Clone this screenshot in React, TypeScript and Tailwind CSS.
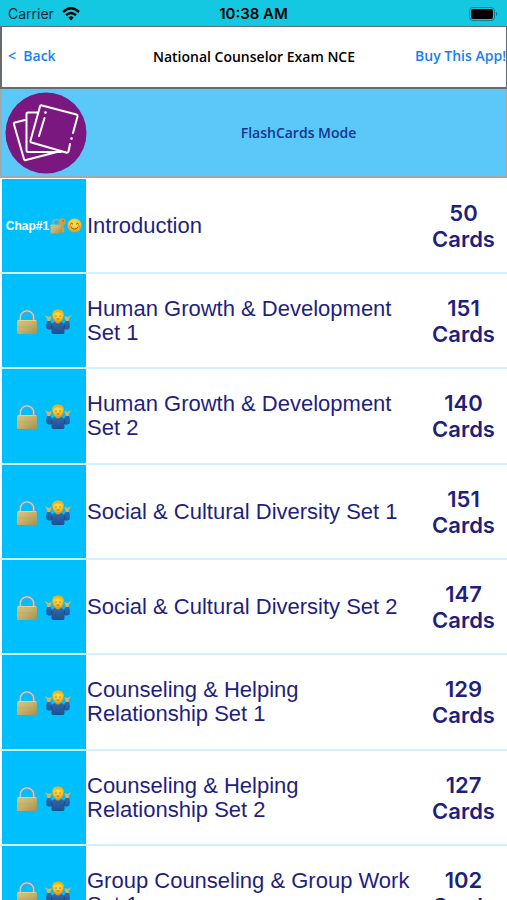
type Chapter = { title: string; cards: number; open?: boolean };

const chapters: Chapter[] = [
  { title: "Introduction", cards: 50, open: true },
  { title: "Human Growth & Development Set 1", cards: 151 },
  { title: "Human Growth & Development Set 2", cards: 140 },
  { title: "Social & Cultural Diversity Set 1", cards: 151 },
  { title: "Social & Cultural Diversity Set 2", cards: 147 },
  { title: "Counseling & Helping Relationship Set 1", cards: 129 },
  { title: "Counseling & Helping Relationship Set 2", cards: 127 },
  { title: "Group Counseling & Group Work Set 1", cards: 102 },
];

function Gradients() {
  return (
    <svg className="absolute h-0 w-0" aria-hidden="true">
      <defs>
        <linearGradient id="brass" x1="0" y1="0" x2="1" y2="1">
          <stop offset="0" stopColor="#d8c680" />
          <stop offset="0.5" stopColor="#c4b06a" />
          <stop offset="1" stopColor="#a3904f" />
        </linearGradient>
        <radialGradient id="face" cx="0.5" cy="0.35" r="0.7">
          <stop offset="0" stopColor="#ffe04a" />
          <stop offset="0.6" stopColor="#fbc02d" />
          <stop offset="1" stopColor="#d98a12" />
        </radialGradient>
        <linearGradient id="shirt" x1="0" y1="0" x2="0" y2="1">
          <stop offset="0" stopColor="#2f6cae" />
          <stop offset="1" stopColor="#1d4f91" />
        </linearGradient>
      </defs>
    </svg>
  );
}

function LockIcon() {
  return (
    <svg width="22" height="26" viewBox="0 0 22 26" aria-hidden="true">
      <path d="M4.5 12V8.500a6.500 6.500 0 0 1 13 0V12" fill="none" stroke="#7f9ba6" strokeWidth="2.800" />
      <path d="M4.300 12V8.500a6.700 6.700 0 0 1 13.400 0V12" fill="none" stroke="#bfd2d9" strokeWidth="1.200" />
      <rect x="1" y="11" width="20" height="14" rx="1.500" fill="url(#brass)" />
      <path d="M1.500 18h19" stroke="#b39f5b" strokeWidth="0.400" />
      <path d="M2 11.500h18" stroke="#e8d892" strokeWidth="0.800" />
    </svg>
  );
}

function ShrugIcon() {
  return (
    <svg width="28" height="26" viewBox="0 0 28 26" aria-hidden="true">
      <path d="M.500 6 4.500 8 7.500 7 7 9.500 5.500 12.500 3.400 12 3 9.500ZM27.500 6 23.500 8 20.500 7 21 9.500 22.500 12.500 24.600 12 25 9.500Z" fill="#dcb552" />
      <path d="M3 12 6.300 12 8 14.500 11 12.800H17L20 14.500 21.700 12 25 12Q26.500 16 25.500 19.500 22.500 21.500 20.500 20V23.500Q20 25 18.500 25H9.500Q8 25 7.500 23.500V20Q5.500 21.500 2.500 19.500 1.500 16 3 12Z" fill="url(#shirt)" />
      <path d="M7.500 16 8 20M20.500 16 20 20" stroke="#174375" strokeWidth="0.800" />
      <path d="M11.500 10.500h5V13.500q-2.500 2-5 0Z" fill="#d49a20" />
      <ellipse cx="14" cy="7" rx="5.600" ry="6.200" fill="url(#face)" />
      <path d="M8.300 6.500Q7.500.500 14 .400 20.500.500 19.700 6.500 18.500 3.200 14 3.300 9.600 3.200 8.300 6.500Z" fill="#efb21c" />
      <circle cx="12" cy="7" r="0.600" fill="#6b4716" />
      <circle cx="16" cy="7" r="0.600" fill="#6b4716" />
      <path d="M12.600 10h2.800" stroke="#b0562a" strokeWidth="0.900" />
    </svg>
  );
}

function KeyLockIcon() {
  return (
    <svg width="16" height="16" viewBox="0 0 15 15" aria-hidden="true">
      <path d="M2.800 7V4.500a3 3 0 0 1 6 0V7" fill="none" stroke="#8fa9a5" strokeWidth="1.500" />
      <rect x="0.500" y="6" width="10.500" height="8.500" rx="0.800" fill="url(#brass)" />
      <circle cx="11.500" cy="3.500" r="3.200" fill="#cf9e48" />
      <circle cx="12.300" cy="2.500" r="0.700" fill="#846024" />
      <path d="M12 5V13.500M12 10h1.500M12 12.500h1.500" stroke="#cf9e48" strokeWidth="1.600" />
    </svg>
  );
}

function SmileIcon() {
  return (
    <svg width="15" height="15" viewBox="0 0 15 15" aria-hidden="true">
      <circle cx="7.500" cy="7.500" r="7" fill="url(#face)" />
      <path d="M3.300 6.300q1.400-2 2.700 0M9 6.300q1.400-2 2.700 0" fill="none" stroke="#67400f" strokeWidth="0.900" />
      <path d="M4 9.300q3.500 3.700 7 0" fill="none" stroke="#67400f" strokeWidth="0.900" />
      <circle cx="3" cy="8.500" r="1.400" fill="#f47b45" opacity="0.600" />
      <circle cx="12" cy="8.500" r="1.400" fill="#f47b45" opacity="0.600" />
    </svg>
  );
}

function CardsLogo() {
  return (
    <svg width="82" height="82" viewBox="0 0 82 82" aria-hidden="true" className="shrink-0">
      <circle cx="41" cy="41" r="40.500" fill="#7b187f" />
      <g fill="none" stroke="#fff" strokeWidth="2" strokeLinecap="round" strokeLinejoin="round">
        <path d="M20 28 10 30.500Q8.500 31 9 32.500L19 67Q19.500 68.500 21 68L52 60" />
        <path d="M33 20.500H23Q21.500 20.500 21.500 22V58Q21.500 60 23 60H56" />
        <path d="M68 41 72.500 24.500Q72.800 23 71.500 22.500L37 13.500Q35.500 13 35 14.500L25.500 48.500Q25 50 26.500 50.500L61 60.500Q63 61 63.500 59.500L65 52" />
        <path d="M39.500 26 34 44" />
        <path d="M66.500 46.500v.1M40.500 20.500v.1" strokeWidth="2.600" />
      </g>
    </svg>
  );
}

function StatusBar() {
  return (
    <div className="grid h-[26px] shrink-0 grid-cols-3 items-center bg-[#14c8e2] px-2 pt-0.5 font-['Inter',sans-serif] text-[#082a35]">
      <div className="flex items-center gap-2 text-sm">
        <span>Carrier</span>
        <svg width="18" height="14" viewBox="0 0 18 14" aria-hidden="true">
          <g fill="none" stroke="#000" strokeWidth="2.400">
            <path d="M1 5Q9-2.500 17 5" />
            <path d="M4 8.200q5-4.500 10 0" />
          </g>
          <path d="M6.300 10.500q2.700-2.300 5.400 0L9 13.500Z" />
        </svg>
      </div>
      <span className="text-center text-[15px] leading-5 font-semibold whitespace-nowrap text-black">10:38 AM</span>
      <svg className="justify-self-end" width="30" height="14" viewBox="0 0 30 14" aria-hidden="true">
        <rect x="0.500" y="0.500" width="25" height="13" rx="3.500" fill="none" stroke="#0c7f90" />
        <rect x="2" y="2" width="22" height="10" rx="2" />
        <path d="M27 4.500q2.600 2.500 0 5Z" fill="#0c7f90" />
      </svg>
    </div>
  );
}

export default function App() {
  return (
    <div className="flex h-screen flex-col overflow-hidden bg-white">
      <Gradients />
      <StatusBar />
      <header className="grid h-[63px] shrink-0 grid-cols-[1fr_auto_1fr] items-center border-t border-r border-b-2 border-l-2 border-[#666b70] font-['Open_Sans','Noto_Sans',sans-serif] text-sm font-semibold">
        <button type="button" className="justify-self-start pb-0.5 pl-1.5 whitespace-pre text-[#1681f5]">{"<  Back"}</button>
        <h1 className="text-black">National Counselor Exam NCE</h1>
        <button type="button" className="justify-self-end pb-0.5 whitespace-nowrap text-[#1681f5]">Buy This App!</button>
      </header>
      <section className="flex h-[89px] shrink-0 items-center border-r border-b-2 border-l-2 border-[#a1a9ae] bg-[#5bc8fa] pl-[3px]">
        <CardsLogo />
        <h2 className="grow pl-1 text-center font-['Open_Sans','Noto_Sans',sans-serif] text-sm font-semibold text-[#17368c]">FlashCards Mode</h2>
      </section>
      <ul className="pt-px">
        {chapters.map((chapter) => (
          <li key={chapter.title} className="flex h-[95px] items-stretch border-b-2 border-[#d0f2ff] pl-0.5 text-[#1f1f80] nth-[3n]:h-24">
            <div className="flex w-[84px] shrink-0 items-center justify-center bg-[#00bfff]">
              {chapter.open ? (
                <div className="flex items-center gap-px">
                  <span className="font-['Liberation_Sans',Arial,sans-serif] text-xs font-bold text-white">Chap#1</span>
                  <KeyLockIcon />
                  <SmileIcon />
                </div>
              ) : (
                <div className="flex items-center gap-1.5 pt-0.5">
                  <LockIcon />
                  <ShrugIcon />
                </div>
              )}
            </div>
            <a href="#" className="flex grow items-center pl-px font-['Liberation_Sans',Arial,sans-serif] text-[22px] leading-6">
              <span>{chapter.title}</span>
            </a>
            <p className="flex w-[87px] shrink-0 flex-col justify-center text-center font-['Inter',sans-serif] text-[22px] leading-[26px] font-semibold">
              <span>{chapter.cards}</span>
              <span>Cards</span>
            </p>
          </li>
        ))}
      </ul>
    </div>
  );
}
